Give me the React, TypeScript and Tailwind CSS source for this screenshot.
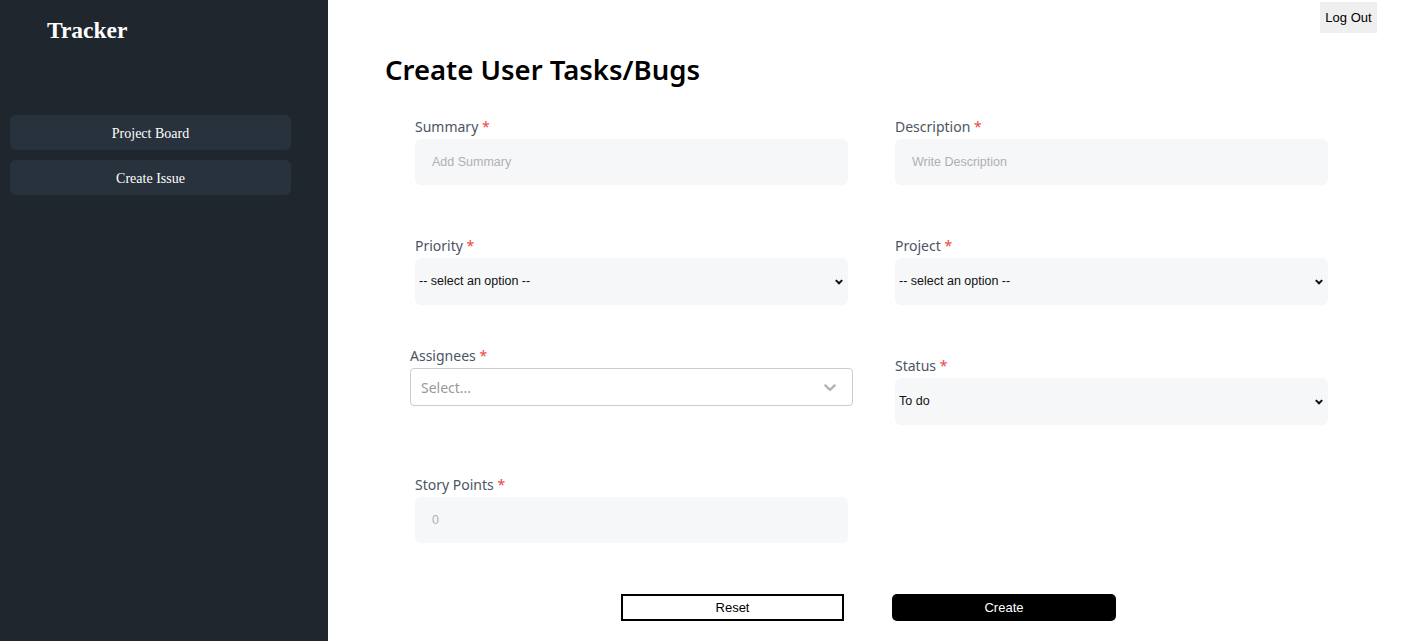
import React from 'react';

const labelCls = "mb-[4px] block text-[14px] leading-[16px] text-[#4b5563] font-['Noto_Sans',sans-serif]";

function Label({ text }: { text: string }) {
  return (
    <label className={labelCls}>
      {text} <span className="text-[#ef4444]">*</span>
    </label>
  );
}

function Chevron() {
  return (
    <svg width="10" height="7" viewBox="0 0 10 7" className="pointer-events-none absolute right-[4px] top-1/2 -translate-y-1/2">
      <path d="M1.8 1.6 L5 4.8 L8.2 1.6" fill="none" stroke="#111" strokeWidth="2" />
    </svg>
  );
}

function Select({ value }: { value: string }) {
  return (
    <div className="relative">
      <select
        defaultValue={value}
        className="w-full h-[47px] appearance-none rounded-md bg-[#f6f7f9] pl-[4px] text-[12.5px] text-[#111] font-['Liberation_Sans',Arial,sans-serif] outline-none"
      >
        <option>{value}</option>
      </select>
      <Chevron />
    </div>
  );
}

function TextInput({ placeholder }: { placeholder: string }) {
  return (
    <input
      placeholder={placeholder}
      className="w-full h-[46px] rounded-md bg-[#f6f7f9] px-[17px] text-[12.5px] font-['Liberation_Sans',Arial,sans-serif] placeholder:text-[#b0b0b0] outline-none"
    />
  );
}

export default function App() {
  return (
    <div className="flex min-h-[641px] w-full bg-white">
      {/* Sidebar */}
      <aside className="w-[328px] shrink-0 bg-[#1f262e] px-[10px] pt-[16px]">
        <h1 className="pl-[37px] text-[23.5px] leading-[28px] font-bold text-white font-['Liberation_Serif',serif]">Tracker</h1>
        <nav className="mt-[71px] w-[281px] space-y-[10px]">
          <button className="block h-[35px] w-full rounded-md bg-[#28323c] pt-[1px] text-[14px] text-white font-['Liberation_Serif',serif]">Project Board</button>
          <button className="block h-[35px] w-full rounded-md bg-[#28323c] pt-[1px] text-[14px] text-white font-['Liberation_Serif',serif]">Create Issue</button>
        </nav>
      </aside>

      {/* Main */}
      <main className="flex-1 pb-[20px]">
        <div className="flex justify-end pr-[41px] pt-[2px]">
          <button className="h-[31px] w-[57px] bg-[#efefef] text-[13px] text-black font-['Liberation_Sans',Arial,sans-serif]">Log Out</button>
        </div>
        <h2 className="ml-[57px] mt-[18px] text-[27.5px] leading-[38px] font-semibold text-black font-['Noto_Sans',sans-serif]">Create User Tasks/Bugs</h2>

        <div className="ml-[87px] mt-[30px] grid grid-cols-[433px_433px] gap-x-[47px]">
          <div>
            <Label text="Summary" />
            <TextInput placeholder="Add Summary" />
          </div>
          <div>
            <Label text="Description" />
            <TextInput placeholder="Write Description" />
          </div>

          <div className="mt-[53px]">
            <Label text="Priority" />
            <Select value="-- select an option --" />
          </div>
          <div className="mt-[53px]">
            <Label text="Project" />
            <Select value="-- select an option --" />
          </div>

          <div className="mt-[43px] ml-[-5px] w-[443px]">
            <Label text="Assignees" />
            <div className="relative flex h-[38px] items-center rounded-[4px] border border-[#cccccc] bg-white pl-[10px]">
              <span className="text-[14px] text-[#999] font-['Noto_Sans',sans-serif]">Select...</span>
              <svg width="20" height="20" viewBox="0 0 20 20" className="absolute right-[12px] top-1/2 -translate-y-1/2" fill="#b3b3b3">
                <path d="M4.516 7.548c0.436-0.446 1.043-0.481 1.576 0l3.908 3.747 3.908-3.747c0.533-0.481 1.141-0.446 1.574 0 0.436 0.445 0.408 1.197 0 1.615-0.406 0.418-4.695 4.502-4.695 4.502-0.217 0.223-0.502 0.335-0.787 0.335s-0.57-0.112-0.789-0.335c0 0-4.287-4.084-4.695-4.502s-0.436-1.17 0-1.615z" />
              </svg>
            </div>
          </div>
          <div className="mt-[53px]">
            <Label text="Status" />
            <Select value="To do" />
          </div>

          <div className="mt-[52px]">
            <Label text="Story Points" />
            <TextInput placeholder="0" />
          </div>
          <div />
        </div>

        <div className="mt-[51px] ml-[293px] flex gap-[48px]">
          <button className="h-[27px] w-[223px] border-2 border-black bg-white text-[13px] text-black font-['Liberation_Sans',Arial,sans-serif]">Reset</button>
          <button className="h-[27px] w-[224px] rounded-[5px] bg-black text-[13px] text-white font-['Liberation_Sans',Arial,sans-serif]">Create</button>
        </div>
      </main>
    </div>
  );
}
